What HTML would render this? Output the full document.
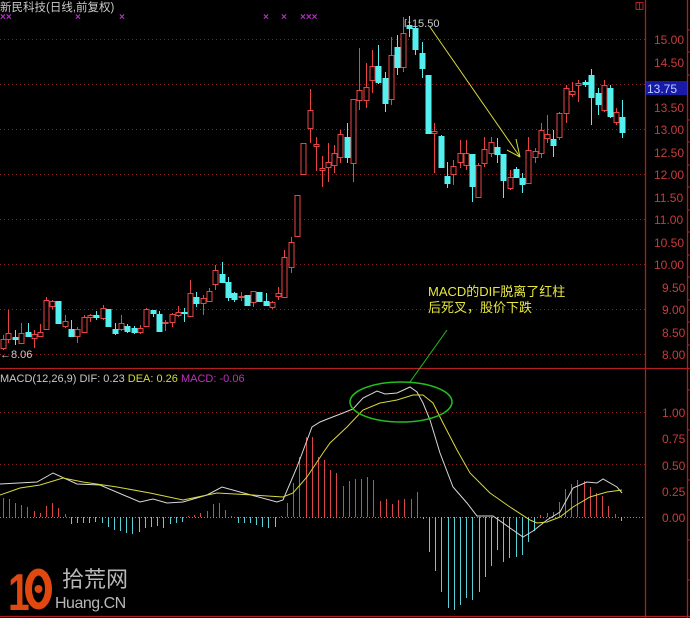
<!DOCTYPE html>
<html><head><meta charset="utf-8"><style>
html,body{margin:0;padding:0;background:#000;width:690px;height:618px;overflow:hidden}
svg{display:block}
text{font-family:"Liberation Sans","Noto Sans CJK SC",sans-serif}
</style></head><body>
<svg id="s" width="690" height="618" xmlns="http://www.w3.org/2000/svg">
<rect width="690" height="618" fill="#000"/>
<g stroke="#8a2020" stroke-width="1" stroke-dasharray="1,3">
<line x1="0" y1="39.5" x2="645" y2="39.5"/><line x1="0" y1="84.5" x2="645" y2="84.5"/>
<line x1="0" y1="129.5" x2="645" y2="129.5"/><line x1="0" y1="174.5" x2="645" y2="174.5"/>
<line x1="0" y1="219.5" x2="645" y2="219.5"/><line x1="0" y1="264.5" x2="645" y2="264.5"/>
<line x1="0" y1="309.5" x2="645" y2="309.5"/><line x1="0" y1="354.5" x2="645" y2="354.5"/>
<line x1="0" y1="412.5" x2="645" y2="412.5"/><line x1="0" y1="464.5" x2="645" y2="464.5"/>
</g>
<line x1="0" y1="517.5" x2="645" y2="517.5" stroke="#8a8a8a" stroke-dasharray="1,2"/>
<g stroke="#b02020" stroke-width="1.3">
<line x1="645.5" y1="0" x2="645.5" y2="618"/><line x1="687.5" y1="0" x2="687.5" y2="618"/>
<line x1="0" y1="368.5" x2="690" y2="368.5"/><line x1="0" y1="616.5" x2="690" y2="616.5"/>
</g>
<rect x="636" y="2.5" width="7" height="7" fill="none" stroke="#b02020"/><line x1="639.5" y1="2" x2="639.5" y2="10" stroke="#b02020"/>
<g id="cand"></g>
<g id="hist"></g>
<polyline fill="none" stroke="#d8d8d8" stroke-width="1" points="0,484 37,482 53,473 77,484 100,485 140,502 153,499 167,503 183,502 207,495 222,487 240,492 277,502 283,500 297,467 312,427 320,422 330,418 343,413 353,409 363,398 377,391 385,394 397,393 410,387 417,392 423,403 430,420 440,453 453,487 467,503 477,516 493,516 510,528 523,537 533,531 547,520 560,512 573,488 587,482 597,483 603,479 617,487 622,493"/>
<polyline fill="none" stroke="#d8d840" stroke-width="1" points="0,495 20,488 40,485 63,478 83,482 117,487 150,493 183,500 217,493 253,495 283,497 293,493 307,477 323,453 330,443 347,427 363,410 380,403 397,400 413,395 423,395 433,403 443,423 457,450 470,473 490,493 510,507 530,520 537,523 547,522 560,517 573,507 590,497 607,492 622,490"/>
<ellipse cx="401" cy="402" rx="51" ry="20" fill="none" stroke="#20c020" stroke-width="1.5"/>
<line x1="447" y1="330" x2="410" y2="382" stroke="#20c020" stroke-width="1"/>
<g stroke="#d8d840" stroke-width="1"><line x1="430" y1="27" x2="520" y2="157"/><line x1="520" y1="157" x2="516" y2="139"/><line x1="520" y1="157" x2="507" y2="150"/></g>
<g fill="#b030c0" font-size="10" font-weight="bold"><text x="0" y="20">××</text><text x="75" y="20">×</text><text x="119" y="20">×</text><text x="263" y="20">×</text><text x="281" y="20">×</text><text x="300" y="20">×××</text></g>
<text x="0" y="11" font-size="11.5" fill="#c8c8c8">新民科技(日线,前复权)</text>
<text x="404" y="27" font-size="11" fill="#c8c8c8">ſ↑15.50</text>
<text x="0" y="358" font-size="11" fill="#c8c8c8">←8.06</text>
<g font-size="12" fill="#c83c3c">
<text x="654" y="44">15.00</text><text x="654" y="67">14.50</text><text x="654" y="134">13.00</text><text x="654" y="157">12.50</text><text x="654" y="179">12.00</text><text x="654" y="202">11.50</text><text x="654" y="224">11.00</text><text x="654" y="247">10.50</text><text x="654" y="269">10.00</text><text x="662" y="292">9.50</text><text x="662" y="314">9.00</text><text x="662" y="337">8.50</text><text x="662" y="359">8.00</text>
<text x="654" y="112">13.50</text>
<text x="662" y="417">1.00</text><text x="662" y="443">0.75</text><text x="662" y="470">0.50</text><text x="662" y="496">0.25</text><text x="662" y="522">0.00</text>
</g>
<rect x="646" y="81" width="41" height="14" fill="#1a1aa8"/>
<text x="647" y="93" font-size="12" fill="#b8d0ff">13.75</text>
<g stroke="#b02020"><line x1="688" y1="30" x2="690" y2="30"/><line x1="688" y1="52" x2="690" y2="52"/><line x1="688" y1="75" x2="690" y2="75"/><line x1="688" y1="120" x2="690" y2="120"/><line x1="688" y1="142" x2="690" y2="142"/><line x1="688" y1="165" x2="690" y2="165"/><line x1="688" y1="187" x2="690" y2="187"/><line x1="688" y1="210" x2="690" y2="210"/><line x1="688" y1="232" x2="690" y2="232"/><line x1="688" y1="255" x2="690" y2="255"/><line x1="688" y1="277" x2="690" y2="277"/><line x1="688" y1="300" x2="690" y2="300"/><line x1="688" y1="322" x2="690" y2="322"/><line x1="688" y1="345" x2="690" y2="345"/><line x1="688" y1="390" x2="690" y2="390"/><line x1="688" y1="430" x2="690" y2="430"/><line x1="688" y1="480" x2="690" y2="480"/><line x1="688" y1="540" x2="690" y2="540"/><line x1="688" y1="580" x2="690" y2="580"/></g>
<text x="0" y="382" font-size="11" fill="#c8c8c8">MACD(12,26,9)  DIF: 0.23 <tspan fill="#d8d840">DEA: 0.26</tspan> <tspan fill="#c030c0">MACD: -0.06</tspan></text>
<text x="428" y="296" font-size="13" fill="#e8e840" font-family="'Liberation Serif','Noto Serif CJK SC',serif">MACD的DIF脱离了红柱</text>
<text x="428" y="312" font-size="13" fill="#e8e840" font-family="'Liberation Serif','Noto Serif CJK SC',serif">后死叉，股价下跌</text>
<text x="8" y="610" font-size="52" font-weight="bold" fill="#e04810" transform="translate(8 0) scale(0.75 1) translate(-8 0)">1</text>
<ellipse cx="38.5" cy="589" rx="10" ry="17" fill="none" stroke="#e04810" stroke-width="7"/>
<circle cx="38.5" cy="589" r="4" fill="#e04810"/>
<text x="62" y="587" font-size="22" fill="#b8b8b8">拾荒网</text>
<text x="55" y="608" font-size="16" fill="#b8b8b8" letter-spacing="-0.5">Huang.CN</text>
</svg>
<script>
var C=[[2.7,339,348,335,350,1],[8.3,333,339,310,343,1],[14.7,337,339,330,345,0],[21.3,333,343,323,343,1],[27.7,332,336,323,337,0],[33.7,334,338,330,348,1],[39.7,332,336,324,337,1],[45.7,300,329,297,330,1],[52,301,306,300,309,1],[58.3,301,323,301,323,0],[64.7,321,326,315,328,1],[71,329,336,320,336,0],[77.3,329,336,327,343,1],[83.7,317,332,315,332,1],[90,315,317,314,322,1],[96.3,315,317,311,320,0],[102.7,308,318,305,320,1],[108.3,309,326,309,327,0],[114.7,329,333,323,335,0],[121,323,329,315,331,1],[127.3,326,331,324,333,0],[133.7,328,332,326,334,0],[140,328,332,325,334,1],[146.3,309,326,308,326,1],[152.7,310,313,310,317,0],[159,314,331,311,332,0],[165.3,322,323,320,331,1],[171.7,314,322,313,327,1],[178,312,315,306,317,1],[184,312,313,308,322,0],[190,293,316,280,317,1],[196.3,297,303,292,307,0],[202.7,298,303,295,315,1],[209,291,301,288,301,1],[215.3,270,284,265,290,1],[221.7,274,282,262,282,0],[228,282,297,277,301,0],[234.3,293,299,292,302,0],[240.7,296,297,292,301,1],[247,295,305,295,306,0],[253.3,291,302,291,307,1],[259.3,292,301,292,302,0],[265.7,301,305,293,306,0],[271.7,302,307,301,309,1],[278,293,296,287,300,1],[284.3,257,297,250,297,1],[290.7,242,267,237,273,1],[296.7,195,236,195,237,1],[303,143,174,143,174,1],[309.7,110,128,89,143,1],[316,144,146,137,171,1],[322.3,168,170,156,187,1],[328,162,167,143,182,1],[334,153,165,145,173,1],[340.3,134,157,130,163,1],[346.7,137,157,123,163,0],[353,99,163,99,182,1],[359,90,100,48,110,1],[365.7,87,100,63,108,1],[372,66,80,50,93,1],[378.3,66,82,45,84,0],[384.7,78,103,72,112,0],[390.7,55,99,37,105,1],[396.7,47,67,35,75,0],[402.7,33,67,17,72,1],[409,25,28,16,37,0],[415.3,28,49,27,55,0],[421.7,53,68,42,78,0],[428.3,75,133,75,133,0],[434.3,131,133,123,173,1],[441,136,167,135,168,0],[447,176,183,162,188,0],[453.3,166,174,160,185,1],[460,153,162,140,168,1],[466,153,165,140,170,1],[472.3,154,186,154,202,0],[478.3,165,197,163,198,1],[484.3,149,163,137,167,1],[490.7,142,153,137,157,1],[497,147,154,138,163,0],[503.3,154,180,154,198,0],[509.7,177,188,170,190,1],[516,169,177,167,178,0],[522.3,178,184,173,193,0],[528.3,150,183,137,183,1],[535,151,157,148,163,1],[541,130,153,123,158,1],[547,134,138,115,143,1],[553.3,139,145,130,157,0],[559.3,113,137,112,140,1],[566,88,113,85,123,1],[572.3,91,94,82,97,1],[578.3,83,85,80,102,1],[585,82,84,80,87,0],[591.3,75,97,69,125,0],[597.7,93,104,88,115,0],[604,85,110,80,112,1],[610,88,116,85,118,0],[616.3,112,122,108,125,1],[622.3,117,132,100,138,0]];
var H=[498,499,503,505,507,511,513,506,503,508,514,524,523,523,523,522,523,527,530,531,533,534,532,528,527,526,528,524,523,522,516,515,513,511,504,503,510,516,523,523,523,525,527,528,527,516,503,483,457,437,437,457,460,470,473,486,481,479,479,477,480,501,499,504,500,499,499,492,519,552,571,592,608,610,605,598,600,592,577,566,550,562,558,557,555,542,531,515,513,512,502,489,484,480,481,487,493,496,506,514,521];
var ns="http://www.w3.org/2000/svg";function el(p,t,a){var e=document.createElementNS(ns,t);for(var k in a)e.setAttribute(k,a[k]);p.appendChild(e);}
var g=document.getElementById("cand");
C.forEach(function(c){var x=Math.round(c[0]),col=c[5]?"#e84444":"#54f0f0";
el(g,"line",{x1:x+.5,y1:c[3],x2:x+.5,y2:c[4],stroke:col});
var h=Math.max(c[2]-c[1],1);
if(c[5])el(g,"rect",{x:x-2,y:c[1]+.5,width:5,height:h,fill:"#000",stroke:col});
else el(g,"rect",{x:x-2.5,y:c[1],width:6,height:h+1,fill:col});});
var hg=document.getElementById("hist");
H.forEach(function(v,i){var x=Math.round(2.7+i*6.18)+.5;el(hg,"line",{x1:x,y1:517,x2:x,y2:v,stroke:v<517?"#d84848":"#58d0d8"});});
</script>
</body></html>
